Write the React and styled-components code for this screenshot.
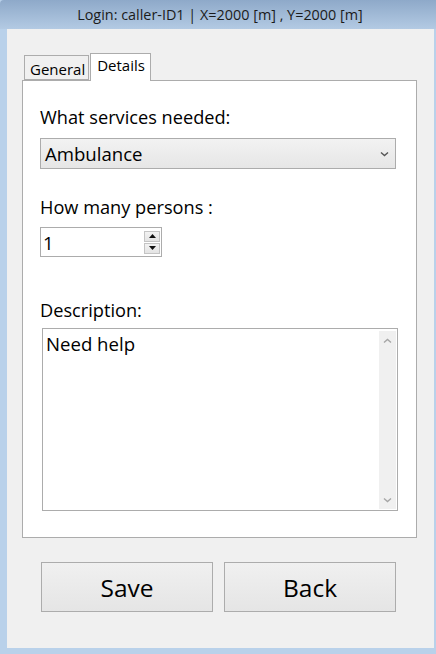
import React from "react";
import styled, { createGlobalStyle } from "styled-components";

const GlobalStyle = createGlobalStyle`
  body {
    margin: 0;
    background: #b9d1ea;
    font-family: "Open Sans", "Noto Sans", sans-serif;
  }
`;

const Chevron = ({ dir = "down", color = "#555" }) => (
  <svg width="9" height="6" viewBox="0 0 9 6">
    <path
      d={dir === "down" ? "M1 1.5 L4.5 4.5 L8 1.5" : "M1 4.5 L4.5 1.5 L8 4.5"}
      fill="none"
      stroke={color}
      strokeWidth="1.4"
    />
  </svg>
);

const Triangle = ({ up }) => (
  <svg width="7" height="4" viewBox="0 0 7 4">
    <path d={up ? "M0 4 L3.5 0 L7 4 Z" : "M0 0 L3.5 4 L7 0 Z"} fill="#111" />
  </svg>
);

const App = () => {
  return (
    <>
      <GlobalStyle />
      <Window>
        <TitleBar>Login: caller-ID1 | X=2000 [m] , Y=2000 [m]</TitleBar>
        <Client>
          <Tabs>
            <Tab>General</Tab>
            <Tab active>Details</Tab>
          </Tabs>
          <Panel>
            <Label>What services needed:</Label>
            <Select>
              <span>Ambulance</span>
              <Chevron />
            </Select>
            <Label gap={28}>How many persons :</Label>
            <Spinner>
              <span>1</span>
              <SpinButtons>
                <SpinButton>
                  <Triangle up />
                </SpinButton>
                <SpinButton>
                  <Triangle />
                </SpinButton>
              </SpinButtons>
            </Spinner>
            <Label gap={43} tight>
              Description:
            </Label>
            <TextArea>
              <span>Need help</span>
              <ScrollBar>
                <Chevron dir="up" color="#a6a6a6" />
                <Chevron color="#a6a6a6" />
              </ScrollBar>
            </TextArea>
          </Panel>
          <ButtonRow>
            <Button>Save</Button>
            <Button>Back</Button>
          </ButtonRow>
        </Client>
      </Window>
    </>
  );
};

export default App;

const Window = styled.div`
  width: 436px;
  height: 654px;
  box-sizing: border-box;
  display: flex;
  flex-direction: column;
  padding: 0 2px 6px 7px;
  background: #b9d1ea;
  border-top-left-radius: 4px;
`;

const TitleBar = styled.div`
  height: 29px;
  margin-left: -7px;
  margin-right: -2px;
  display: flex;
  align-items: center;
  justify-content: center;
  padding-left: 4px;
  font-size: 14.4px;
  color: #1b1b1b;
  background: linear-gradient(#8ea9c9, #b3cae3);
  border-top-left-radius: 4px;
`;

const Client = styled.div`
  flex: 1;
  background: #f0f0f0;
  padding: 24px 0 0 15px;
`;

const Tabs = styled.div`
  display: flex;
  align-items: flex-end;
  height: 27px;
  margin-left: 2px;
`;

const Tab = styled.div`
  box-sizing: border-box;
  height: ${(p) => (p.active ? "28px" : "25px")};
  margin-bottom: ${(p) => (p.active ? "-1px" : "0")};
  padding: ${(p) => (p.active ? "1px 5px 0 6px" : "3px 3px 0 5px")};
  font-size: 15px;
  line-height: 20px;
  color: #000;
  background: ${(p) => (p.active ? "#fff" : "#f0f0f0")};
  border: 1px solid #acacac;
  border-bottom: ${(p) => (p.active ? "none" : "1px solid #acacac")};
  margin-right: ${(p) => (p.active ? "0" : "1px")};
  position: relative;
  z-index: ${(p) => (p.active ? 1 : 0)};
`;

const Panel = styled.div`
  box-sizing: border-box;
  width: 395px;
  height: 458px;
  background: #fff;
  border: 1px solid #acacac;
  padding: 26px 0 0 17px;
  display: flex;
  flex-direction: column;
  align-items: flex-start;
`;

const Label = styled.div`
  font-size: 18.2px;
  line-height: 20px;
  color: #000;
  margin-top: ${(p) => p.gap || 0}px;
  margin-bottom: ${(p) => (p.tight ? 8 : 10)}px;
`;

const Select = styled.div`
  box-sizing: border-box;
  width: 356px;
  height: 31px;
  margin-top: 1px;
  display: flex;
  align-items: center;
  justify-content: space-between;
  padding: 0 6px 0 4px;
  font-size: 18.6px;
  color: #000;
  background: linear-gradient(#f2f2f2, #e6e6e6);
  border: 1px solid #acacac;
`;

const Spinner = styled.div`
  box-sizing: border-box;
  width: 122px;
  height: 30px;
  display: flex;
  align-items: center;
  justify-content: space-between;
  padding: 0 1px 0 2px;
  font-size: 18.6px;
  color: #000;
  background: #fff;
  border: 1px solid #acacac;
`;

const SpinButtons = styled.div`
  display: flex;
  flex-direction: column;
  gap: 1px;
`;

const SpinButton = styled.div`
  box-sizing: border-box;
  width: 16px;
  height: 11px;
  display: flex;
  align-items: center;
  justify-content: center;
  background: linear-gradient(#f2f2f2, #e4e4e4);
  border: 1px solid #c4c4c4;
`;

const TextArea = styled.div`
  box-sizing: border-box;
  width: 356px;
  height: 183px;
  margin-left: 2px;
  display: flex;
  justify-content: space-between;
  padding: 2px 1px 1px 3px;
  font-size: 18.6px;
  line-height: 26px;
  color: #000;
  background: #fff;
  border: 1px solid #acacac;
`;

const ScrollBar = styled.div`
  width: 17px;
  display: flex;
  flex-direction: column;
  justify-content: space-between;
  align-items: center;
  padding: 7px 0 6px;
  background: #f0f0f0;
`;

const ButtonRow = styled.div`
  display: flex;
  gap: 11px;
  margin: 24px 0 0 19px;
`;

const Button = styled.div`
  box-sizing: border-box;
  width: 172px;
  height: 50px;
  display: flex;
  align-items: center;
  justify-content: center;
  font-size: 24.5px;
  color: #000;
  background: linear-gradient(#f0f0f0, #e5e5e5);
  border: 1px solid #acacac;
`;
